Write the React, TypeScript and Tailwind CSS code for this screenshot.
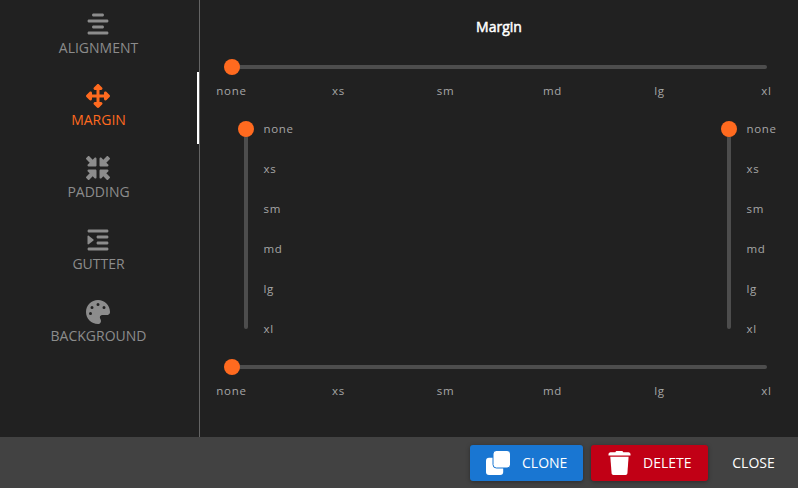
import { FaAlignCenter, FaUpDownLeftRight, FaMinimize, FaIndent, FaPalette } from 'react-icons/fa6';

const SIZES = ['none', 'xs', 'sm', 'md', 'lg', 'xl'];

const TABS = [
  { label: 'ALIGNMENT', icon: FaAlignCenter },
  { label: 'MARGIN', icon: FaUpDownLeftRight, active: true },
  { label: 'PADDING', icon: FaMinimize },
  { label: 'GUTTER', icon: FaIndent },
  { label: 'BACKGROUND', icon: FaPalette },
];

function CloneIcon() {
  return (
    <svg viewBox="0 0 24 24" className="size-6" fill="currentColor">
      <rect x="0" y="6.8" width="17.2" height="17.2" rx="3" />
      <rect x="7" y="-0.5" width="17.5" height="17.5" rx="3.4" stroke="#1976d2" strokeWidth="1" />
    </svg>
  );
}

function TrashIcon() {
  return (
    <svg viewBox="0 0 24 24" className="size-6" fill="currentColor">
      <path d="M10 0h4.6c.8 0 1.4.5 1.6 1.2h5.300c1.200 0 2 1 2 2.100v1.200h-22V3.300c0-1.100.8-2.100 2-2.100h4.900C8.600.5 9.200 0 10 0z" />
      <path d="M3.300 5.800h18.300l-1.200 16.500c-.1 1-.8 1.700-1.800 1.700H6.400c-1 0-1.700-.7-1.800-1.700z" />
    </svg>
  );
}

function HorizontalSlider() {
  return (
    <div className="mx-8 h-[54px] w-[535px]">
      <div className="relative mt-2 h-1 rounded-sm bg-[#4d4d4d]">
        <span className="absolute -left-2 -top-1.5 size-4 rounded-full bg-[#ff6a1f]" />
      </div>
      <div className="-ml-[0.5px] mr-[0.5px] mt-3 flex justify-between text-[11.5px] leading-5 tracking-[0.7px] text-[#a6a6a6]">
        {SIZES.map((s) => (
          <span key={s} className="flex w-0 justify-center">
            <span>{s}</span>
          </span>
        ))}
      </div>
    </div>
  );
}

function VerticalSlider() {
  return (
    <div className="flex h-[200px] gap-[15.5px]">
      <div className="relative w-1 rounded-sm bg-[#4d4d4d]">
        <span className="absolute -left-1.5 -top-2 size-4 rounded-full bg-[#ff6a1f]" />
      </div>
      <div className="flex w-[34.5px] flex-col justify-between text-[11.5px] tracking-[0.7px] text-[#a6a6a6]">
        {SIZES.map((s) => (
          <span key={s} className="flex h-0 items-center">
            {s}
          </span>
        ))}
      </div>
    </div>
  );
}

export default function App() {
  return (
    <div className="flex h-[488px] w-[798px] flex-col overflow-hidden bg-[#212121] font-['Open_Sans','Noto_Sans',sans-serif] text-sm text-white">
      <div className="flex h-[437px]">
        <nav className="flex w-[200px] flex-col border-r border-[#646464]">
          {TABS.map(({ label, icon: Icon, active }) => (
            <button
              key={label}
              className={`flex h-[72px] flex-col items-center border-r-2 pt-3 ${
                active ? 'border-white text-[#ff6a1f]' : 'border-transparent text-[#8c8c8c]'
              }`}
            >
              <Icon size={24} className="mr-px" />
              <span className="mt-[2px] leading-5">{label}</span>
            </button>
          ))}
        </nav>
        <main className="flex w-[598px] flex-col">
          <h2 className="mt-4 h-[41px] text-center leading-[21px] [-webkit-text-stroke:0.5px_white]">Margin</h2>
          <HorizontalSlider />
          <div className="mt-[18px] flex justify-between pl-11 pr-[17px]">
            <VerticalSlider />
            <VerticalSlider />
          </div>
          <div className="mt-[28px]">
            <HorizontalSlider />
          </div>
        </main>
      </div>
      <footer className="flex h-[51px] items-start justify-end gap-2 bg-[#424242] pr-[7px] pt-2">
        <button className="flex h-9 w-[113px] items-center rounded-[3px] bg-[#1976d2] pl-4 shadow-[0_1px_4px_rgba(0,0,0,0.35)]">
          <CloneIcon />
          <span className="ml-3">CLONE</span>
        </button>
        <button className="flex h-9 w-[117px] items-center rounded-[3px] bg-[#c10015] pl-4 shadow-[0_1px_4px_rgba(0,0,0,0.35)]">
          <TrashIcon />
          <span className="ml-3">DELETE</span>
        </button>
        <button className="h-9 w-[75px]">CLOSE</button>
      </footer>
    </div>
  );
}
